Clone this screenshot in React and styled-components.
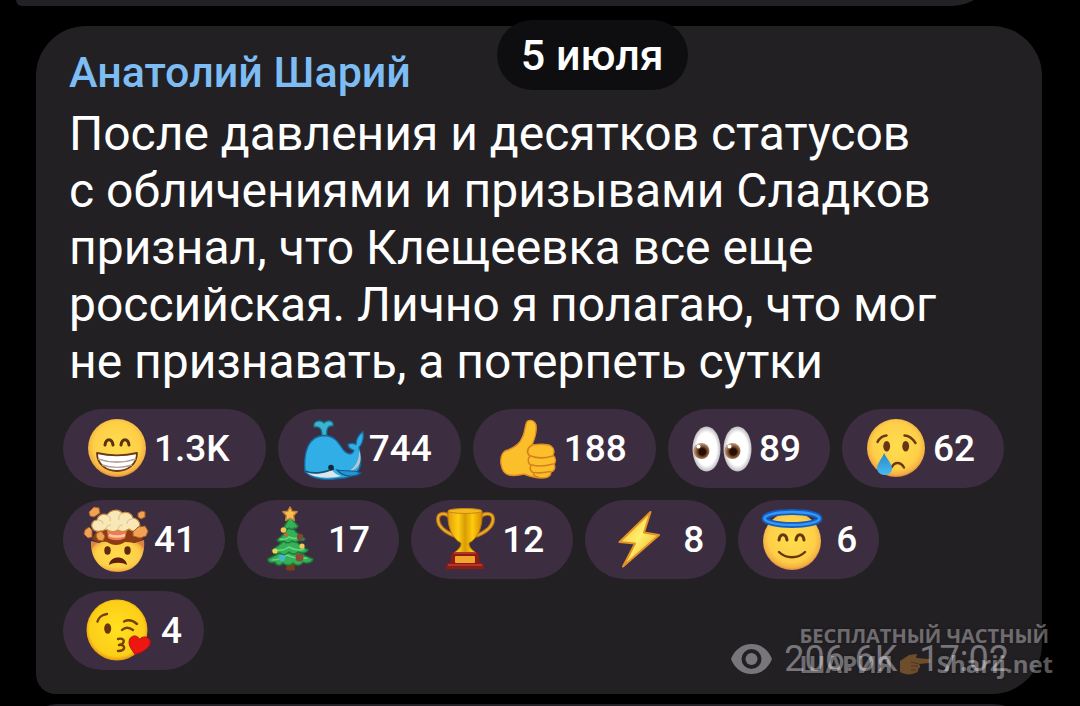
import React from 'react';
import styled, { createGlobalStyle, css } from 'styled-components';

const GlobalStyle = createGlobalStyle`
  * {
    box-sizing: border-box;
  }
  body {
    margin: 0;
    background: #000;
    font-family: Roboto, 'Noto Sans', sans-serif;
  }
`;

const Chat = styled.main`
  position: relative;
  display: flex;
  flex-direction: column;
  height: 100vh;
  overflow: hidden;
`;

const PreviousBubble = styled.div`
  flex: none;
  height: 60px;
  margin: -54px 80px 20px 16px;
  border-radius: 0 0 50px 6px;
  background: #242126;
`;

const NextBubble = styled.div`
  flex: none;
  height: 60px;
  margin: 10px 38px 0 36px;
  border-radius: 20px 50px 0 0;
  background: #242126;
`;

const Bubble = styled.article`
  flex: none;
  margin: 0 38px 0 36px;
  padding: 18px 27px 24px;
  border-radius: 50px 50px 50px 20px;
  background: #232024;
`;

const Author = styled.h2`
  margin: 0 6px 5px;
  color: #7dbdf3;
  font-size: 43px;
  line-height: 56px;
  font-weight: 500;
`;

const Message = styled.p`
  margin: 0 6px 19px;
  color: #fff;
  font-size: 48px;
  line-height: 57px;
`;

const DateBadge = styled.time`
  position: absolute;
  top: 20px;
  left: 46%;
  padding: 0 24px;
  border-radius: 36px;
  background: #0e0d10;
  color: #fff;
  font-size: 43px;
  line-height: 70px;
  font-weight: 500;
`;

const Reactions = styled.ul`
  display: flex;
  flex-wrap: wrap;
  gap: 12px;
  margin: 0;
  padding: 0;
  list-style: none;
`;

const Reaction = styled.button`
  display: flex;
  align-items: center;
  gap: 5px;
  height: 79px;
  padding: 0 29px 0 22px;
  border: 0;
  border-radius: 40px;
  background: #3c2e40;
  color: #fff;
  font-family: inherit;
  font-size: 37px;
  font-weight: 500;
  cursor: pointer;
  ${(props) =>
    props.$size === 'short' &&
    css`
      gap: 12px;
      padding-right: 22px;
    `}
  ${(props) =>
    props.$size === 'long' &&
    css`
      padding-right: 36px;
    `}
`;

const Emoji = styled.svg`
  flex: none;
  width: 64px;
  height: 64px;
  overflow: visible;
`;

const Meta = styled.li`
  display: flex;
  align-items: center;
  align-self: flex-end;
  gap: 12px;
  height: 22px;
  margin-left: auto;
  padding-right: 6px;
  color: #78767a;
  font-size: 36px;
  line-height: 22px;
`;

const Time = styled.time`
  margin-left: 10px;
`;

const Watermark = styled.div`
  position: absolute;
  right: 27px;
  bottom: 28px;
  color: #fff;
  font-family: 'Open Sans', 'Noto Sans', sans-serif;
  line-height: 28px;
  font-weight: 700;
  text-shadow: 0 0 3px #000;
  opacity: 0.34;
  pointer-events: none;
`;

const WatermarkLine = styled.div`
  display: flex;
  align-items: center;
  gap: 6px;
  font-size: ${(props) => (props.$big ? '24px' : '20px')};
`;

const Gradients = () => (
  <svg width="0" height="0" style={{ position: 'absolute' }} aria-hidden="true">
    <defs>
      <radialGradient id="face" cx="50%" cy="46%" r="54%">
        <stop offset="0" stopColor="#ffdd4c" />
        <stop offset="0.75" stopColor="#fdcf48" />
        <stop offset="0.92" stopColor="#f5b143" />
        <stop offset="1" stopColor="#dd8540" />
      </radialGradient>
      <radialGradient id="sun" cx="50%" cy="48%" r="53%">
        <stop offset="0" stopColor="#ffe01f" />
        <stop offset="0.85" stopColor="#fdce18" />
        <stop offset="1" stopColor="#e58e0d" />
      </radialGradient>
      <radialGradient id="eyeball" cx="50%" cy="50%" r="52%">
        <stop offset="0.7" stopColor="#fff" />
        <stop offset="1" stopColor="#b9b4b8" />
      </radialGradient>
      <radialGradient id="iris" cx="55%" cy="55%" r="50%">
        <stop offset="0.4" stopColor="#260d05" />
        <stop offset="0.6" stopColor="#6c4020" />
        <stop offset="1" stopColor="#b79272" />
      </radialGradient>
      <linearGradient id="gold" x1="0" x2="1">
        <stop offset="0" stopColor="#e59a05" />
        <stop offset="0.3" stopColor="#ffcf13" />
        <stop offset="0.5" stopColor="#d99b04" />
        <stop offset="0.72" stopColor="#ffcb0c" />
        <stop offset="1" stopColor="#d48b04" />
      </linearGradient>
      <linearGradient id="bolt" x1="0" y1="0" x2="1" y2="1">
        <stop offset="0" stopColor="#ffae24" />
        <stop offset="0.48" stopColor="#fff06b" />
        <stop offset="1" stopColor="#f39a16" />
      </linearGradient>
      <linearGradient id="tear" x1="0" y1="0" x2="0" y2="1">
        <stop offset="0" stopColor="#2689c7" />
        <stop offset="1" stopColor="#48baf1" />
      </linearGradient>
    </defs>
  </svg>
);

const Grin = () => (
  <>
    <circle cx="32" cy="31" r="29" fill="url(#face)" />
    <path
      d="M20 28c1-7 7-7 8 0M36 28c1-7 7-7 8 0"
      fill="none"
      stroke="#5b310f"
      strokeWidth="3"
      strokeLinecap="round"
    />
    <path
      d="M12 36c13 3 27 3 40 0 0 11-9 18-20 18S12 47 12 36z"
      fill="#fff"
      stroke="#693a16"
      strokeWidth="1.8"
      strokeLinejoin="round"
    />
    <path
      d="M13 42c12 4 26 4 38 0M17 48c9 3 21 3 30 0"
      fill="none"
      stroke="#b99f98"
      strokeWidth="1.6"
    />
  </>
);

const Whale = () => (
  <>
    <path
      d="M22 19C22 12 20 9 14 10c-1-6 6-8 10-4 4-4 10-2 9 3-5-1-7 3-6 10z"
      fill="#38b4d0"
      stroke="#16708f"
      strokeWidth="1.2"
    />
    <path
      d="M5 55C3 32 10 19 24 18.5c11 0 15 8 19 14 4 5 9 6 11 1-3-1-6-3-6-6 3-2 6-1 8 0 0-5 3-10 7-13 1 5 0 12-4 16 2 10 3 18-1 23-4 5-11 8-20 8-14 2-25 1-32-6z"
      fill="#32aee6"
      stroke="#14669b"
      strokeWidth="1.3"
      strokeLinejoin="round"
    />
    <path d="M59 32c4 12 1 20-11 23 8-5 12-13 11-23z" fill="#b9c5cd" />
    <path d="M6 55c9 3 18 1 26-2 2 3 5 5 9 6-12 3-28 2-35-4z" fill="#dfe4e8" />
    <path d="M5 54c10 4 20 1 29-2" fill="none" stroke="#14557e" strokeWidth="1.6" />
    <path
      d="M37 53c7 2 15-1 24 3-7 5-18 4-24-3z"
      fill="#2395d0"
      stroke="#12598c"
      strokeWidth="1.2"
    />
    <circle cx="31" cy="50.5" r="2.8" fill="#142636" />
  </>
);

const ThumbUp = () => (
  <>
    <path
      d="M6 47c-1-8 2-13 7-14 7-3 12-6 15-14 2-5 2-9 3-12 1-5 8-5 10 1 1 7-1 13-4 20 7-1 14-2 19 1 4 3 3 7 2 9 3 3 3 7 1 9 2 4 0 7-3 8 0 5-4 6-9 6-8 0-13-2-18-4-4 1-10 2-15 1-5-1-7-5-8-11z"
      fill="#fbbf2b"
      stroke="#e08e22"
      strokeWidth="1.4"
      strokeLinejoin="round"
    />
    <path
      d="M37 28c-5 3-6 8-2 11-3 3-2 8 1 9-2 4 0 7 3 8-1 2 1 4 4 4M36 39c7 3 15 2 22 0M37 48c7 2 14 1 21-1M40 55.5c6 1 10 0 15-1"
      fill="none"
      stroke="#d67f1e"
      strokeWidth="1.6"
      strokeLinecap="round"
    />
  </>
);

const Eyes = () => (
  <>
    <ellipse cx="16.5" cy="32" rx="14" ry="22.5" fill="url(#eyeball)" />
    <ellipse cx="47.5" cy="32" rx="14" ry="22.5" fill="url(#eyeball)" />
    <circle cx="11.5" cy="34" r="8" fill="url(#iris)" />
    <circle cx="42.5" cy="34" r="8" fill="url(#iris)" />
    <circle cx="8.5" cy="29.5" r="2" fill="#fff" />
    <circle cx="39.5" cy="29.5" r="2" fill="#fff" />
  </>
);

const Crying = () => (
  <>
    <circle cx="32" cy="31" r="29" fill="url(#face)" />
    <ellipse cx="22.7" cy="29.3" rx="3.4" ry="5.2" fill="#693316" />
    <ellipse cx="41.7" cy="29.3" rx="3.4" ry="5.2" fill="#693316" />
    <path
      d="M13.5 25c2-4 5-6 9-6.5M40.5 18.5c5 0 8 3 11 7.5M27.500 50.500c3-6 9-6 12.500 0"
      fill="none"
      stroke="#6b3815"
      strokeWidth="2.4"
      strokeLinecap="round"
    />
    <path
      d="M20 36c3 6 8 11 8 15.5 0 4-3.5 6.5-7.5 6.5S13 55 13 51c0-5 5-9 7-15z"
      fill="url(#tear)"
    />
  </>
);

const Exploding = () => (
  <>
    <path d="M6 33l8 2 7-3 10 4 9-4 9 3 10-3c2 18-9 32-26 32S5 51 6 33z" fill="url(#face)" />
    <path
      d="M7 31c6 5 10 2 15 3 6 4 12 4 18 0 7 0 13 2 18-3l-7-10H13z"
      fill="#8c3c12"
    />
    <path d="M22 22h20l-2 8c-5 3-12 3-17 0z" fill="#f37a50" />
    <path d="M24 27c5 2 11 2 16 0" fill="none" stroke="#ffcaa6" strokeWidth="2.5" />
    <path
      d="M9 22c-5-5-1-10 3-10 1-5 6-7 10-5 4-6 12-6 15-2 6-2 10 1 11 5 6 1 9 7 5 12-3 2-7 1-9-1-4 3-8 3-11 1-4 2-9 2-12-1-4 3-9 3-12 1z"
      fill="#f8e8b8"
      stroke="#c98a42"
      strokeWidth="1.2"
    />
    <path
      d="M13 12c3 0 5 2 5 4M22 7c3 1 4 4 3 6M37 5c-3 2-4 4-3 7M48 11c-4 0-6 2-6 5M21 22c0-3 2-5 5-5M33 22c0-3 2-5 5-5"
      fill="none"
      stroke="#dfc690"
      strokeWidth="1.2"
    />
    <g fill="#f1a054" stroke="#a55d25" strokeWidth="1" strokeLinejoin="round">
      <path d="M4 4l5-5 5 1 1 5-6 4-4-1z" />
      <path d="M53 5l4-2 3 1v5l-4 2-3-2z" />
      <path d="M0 22l4-3 3 3 0 7-4 1-4-4z" />
      <path d="M12 25l4-2 4 5-2 5-5-1-2-4z" />
      <path d="M53 19l7-1 3 5-2 5-6 2-7-2 0-4z" />
    </g>
    <ellipse cx="22.5" cy="42.5" rx="3.2" ry="4.2" fill="#5e2b10" />
    <ellipse cx="42.5" cy="42.5" rx="3.2" ry="4.2" fill="#5e2b10" />
    <path d="M24 57c1-10 17-10 18 0-5-3-13-3-18 0z" fill="#5e1f10" />
  </>
);

const Tree = () => (
  <>
    <path d="M28 53h7l1 9c-3 1-6 1-9 0z" fill="#7c3e17" />
    <g fill="#35b057" stroke="#1d7a3a" strokeWidth="1.4" strokeLinejoin="round">
      <path d="M31 36c-5 6-11 10-22 15 0 4 4 4 7 3 1 4 6 4 8 1 3 3 8 3 10 0 3 3 8 3 10-1 3 2 9 1 10-3-9-3-18-9-23-15z" />
      <path d="M31 25c-4 7-10 12-18 17 1 4 5 4 8 3 3 3 7 2 9-1 3 3 7 3 9 0 4 2 9 1 10-2-8-4-14-9-18-17z" />
      <path d="M31 15c-2 7-6 12-13 17 2 3 5 2 7 1 2 3 6 2 8 0 3 2 6 1 7-1 2 1 5 1 6-1-7-4-12-9-15-16z" />
      <path d="M31 9l-6 10c2 2 4 2 5 1 2 2 4 2 5 0 2 1 3 0 4-2z" />
    </g>
    <path
      d="M21 31c4 1 7 0 9-2 4 2 8 2 12 0M17 42c5 1 9 0 13-3 5 3 10 4 15 2M14 52c5 0 10-2 14-5 6 3 12 4 20 3"
      fill="none"
      stroke="#6ad67d"
      strokeWidth="1.5"
      strokeLinecap="round"
    />
    <path
      d="M31-1l2.2 4.200 5 .6-3.600 3.700.8 5-4.400-2.300-4.400 2.300.8-5L23.800 3.800l5-.6z"
      fill="#f9bd52"
      stroke="#c98435"
      strokeWidth="1.4"
      strokeLinejoin="round"
    />
    <circle cx="24.5" cy="22" r="2.8" fill="#f2c355" />
    <circle cx="41" cy="29" r="3.2" fill="#7e4a35" />
    <circle cx="27" cy="27" r="2" fill="#c26941" />
    <circle cx="43" cy="38" r="2.6" fill="#eecb5a" />
    <circle cx="16" cy="43" r="2.6" fill="#f1cf5b" />
    <circle cx="40.5" cy="49.5" r="4" fill="#8e4836" />
    <circle cx="23" cy="50" r="3.2" fill="#45b3d2" />
  </>
);

const Trophy = () => (
  <>
    <path
      d="M17 9C12 4 5 5 5 11c0 8 7 13 17 17M47 9c5-5 13-4 13 2 0 8-7 13-17 17"
      fill="none"
      stroke="#bb7413"
      strokeWidth="4"
    />
    <path
      d="M17 9C12 4 5 5 5 11c0 8 7 13 17 17M47 9c5-5 13-4 13 2 0 8-7 13-17 17"
      fill="none"
      stroke="#edae30"
      strokeWidth="1.8"
    />
    <path
      d="M15 3h34c1 14-3 27-13 32 0 4 2 6 6 9v3H22v-3c4-3 6-5 6-9C18 30 14 17 15 3z"
      fill="url(#gold)"
      stroke="#b87808"
      strokeWidth="1"
    />
    <ellipse cx="32" cy="3" rx="17" ry="2.5" fill="#f4b91e" stroke="#c88911" strokeWidth="1" />
    <path d="M19 44h26l2 11h2c2 1 2 3 2 6H13c0-3 0-5 2-6h2z" fill="#8e1c13" />
    <path d="M21 45h22M15 57h34" stroke="#bd4030" strokeWidth="1.5" />
    <rect x="22" y="48" width="20" height="7" rx="1" fill="#f3a42f" />
  </>
);

const Bolt = () => (
  <path
    d="M43.5 4L12.5 34l15.500 1.500L16 58.500 52 27l-15-2.500z"
    fill="url(#bolt)"
    stroke="#e69126"
    strokeWidth="2"
    strokeLinejoin="round"
  />
);

const Halo = () => (
  <>
    <circle cx="32" cy="33" r="29" fill="url(#face)" />
    <path
      d="M19 32c1-7 7-7 8 0M36 32c1-7 7-7 8 0"
      fill="none"
      stroke="#65370f"
      strokeWidth="3"
      strokeLinecap="round"
    />
    <path
      d="M19 44c7 7 19 7 26 0"
      fill="none"
      stroke="#65370f"
      strokeWidth="2.4"
      strokeLinecap="round"
    />
    <ellipse cx="32" cy="10.5" rx="27.5" ry="6.5" fill="none" stroke="#145dc4" strokeWidth="6" />
    <ellipse cx="32" cy="10.5" rx="27.5" ry="6.5" fill="none" stroke="#339bf5" strokeWidth="2.4" />
  </>
);

const Kiss = () => (
  <>
    <circle cx="32" cy="31" r="30.5" fill="url(#sun)" />
    <ellipse cx="22.7" cy="29.5" rx="3.5" ry="5.2" fill="#693509" />
    <path
      d="M12.5 22.500c1-4 5-7 9.500-7.500M39 22.500c4-2 9-1 13 2.500M37 31c3-3 7-3 11 0M33 40c7-2 8 5 1 6 7-1 7 6-1 6"
      fill="none"
      stroke="#74400b"
      strokeWidth="2.4"
      strokeLinecap="round"
      strokeLinejoin="round"
    />
    <path
      d="M50 55.5c-3-5-8-10-5-16 3-4 8-3 9.500 1 3-4 9-3 10.500 1 2 6-7 12-15 14z"
      fill="#ed1711"
      stroke="#ac120e"
      strokeWidth="1"
    />
  </>
);

const EyeIcon = () => (
  <svg width="41" height="30" viewBox="0 0 41 30" aria-hidden="true">
    <path
      d="M20.5 0C11 0 3.500 6 0 15c3.500 9 11 15 20.500 15S37.500 24 41 15C37.500 6 30 0 20.500 0zm0 25a10 10 0 1 1 0-20 10 10 0 0 1 0 20z"
      fill="currentColor"
      fillRule="evenodd"
    />
    <circle cx="20.5" cy="15" r="6" fill="currentColor" />
  </svg>
);

const PointingHand = () => (
  <svg width="32" height="22" viewBox="0 0 32 22" aria-hidden="true">
    <path
      d="M1 8l9-6 8-1-1 4 13 1c3 1 2 4 0 4l-10 1c2 2 1 4-1 5 1 2-1 4-3 4-3 2-10 2-15-1z"
      fill="#ffa43a"
    />
    <path d="M12 9l8 2M12 13h7M12 17h5" stroke="#9b5a17" strokeWidth="1" />
  </svg>
);

const reactions = [
  { label: 'Grin', icon: Grin, count: '1.3K', size: 'long' },
  { label: 'Whale', icon: Whale, count: '744' },
  { label: 'Thumbs up', icon: ThumbUp, count: '188' },
  { label: 'Eyes', icon: Eyes, count: '89' },
  { label: 'Crying', icon: Crying, count: '62' },
  { label: 'Exploding head', icon: Exploding, count: '41' },
  { label: 'Christmas tree', icon: Tree, count: '17' },
  { label: 'Trophy', icon: Trophy, count: '12' },
  { label: 'Lightning', icon: Bolt, count: '8', size: 'short' },
  { label: 'Halo', icon: Halo, count: '6', size: 'short' },
  { label: 'Kiss', icon: Kiss, count: '4', size: 'short' },
];

export default function App() {
  return (
    <>
      <GlobalStyle />
      <Gradients />
      <Chat>
        <PreviousBubble />
        <Bubble>
          <Author>Анатолий Шарий</Author>
          <Message>
            После давления и десятков статусов
            <br />
            с обличениями и призывами Сладков
            <br />
            признал, что Клещеевка все еще
            <br />
            российская. Лично я полагаю, что мог
            <br />
            не признавать, а потерпеть сутки
          </Message>
          <Reactions>
            {reactions.map(({ label, icon: Icon, count, size }) => (
              <li key={label}>
                <Reaction type="button" $size={size}>
                  <Emoji viewBox="0 0 64 64" role="img" aria-label={label}>
                    <Icon />
                  </Emoji>
                  {count}
                </Reaction>
              </li>
            ))}
            <Meta>
              <EyeIcon />
              <span>206.6K</span>
              <Time>17:02</Time>
            </Meta>
          </Reactions>
        </Bubble>
        <NextBubble />
        <DateBadge>5 июля</DateBadge>
        <Watermark>
          <WatermarkLine>БЕСПЛАТНЫЙ ЧАСТНЫЙ</WatermarkLine>
          <WatermarkLine $big>
            <span>ШАРИЯ</span>
            <PointingHand />
            <span>Sharij.net</span>
          </WatermarkLine>
        </Watermark>
      </Chat>
    </>
  );
}
